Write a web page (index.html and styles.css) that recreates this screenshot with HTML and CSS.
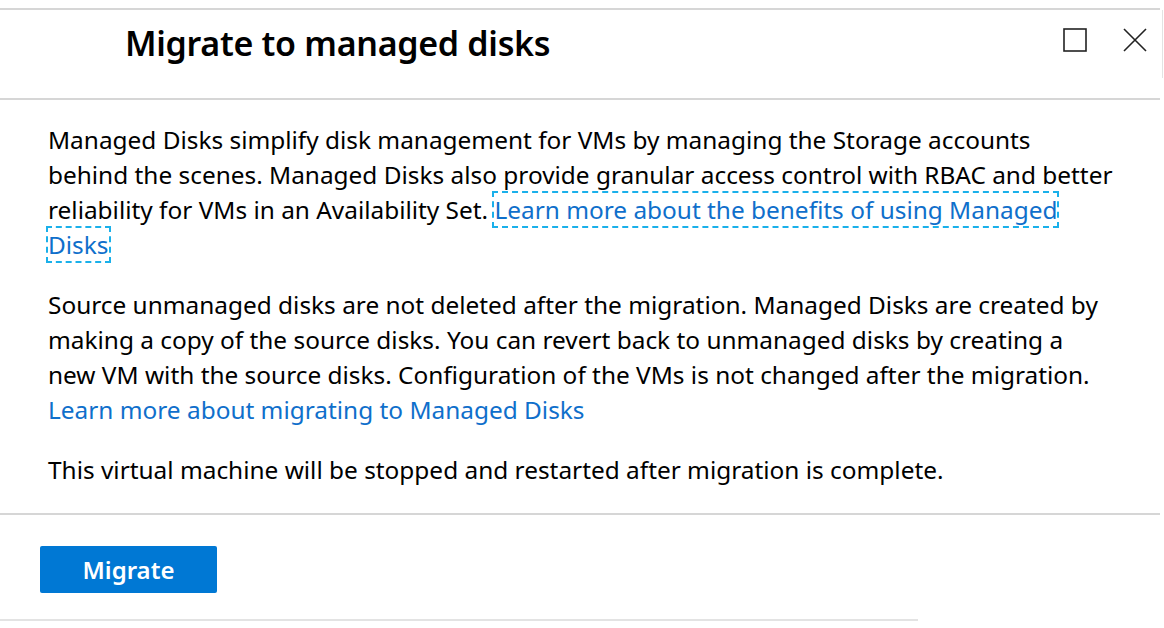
FILE: index.html
```html
<!DOCTYPE html>
<html>
<head lang="en">
    <meta charset="UTF-8">
    <title>Migrate to managed disks</title>
    <link rel="stylesheet" href="styles.css">
</head>
<body>
 <div id="blade">
     <div id="header">
         <h2 id="title">Migrate to managed disks</h2>
         <div id="controls">
             <span class="ctrl" title="Maximize">
                 <svg width="24" height="24" viewBox="0 0 24 24"><rect x="1" y="1" width="22" height="22" fill="none" stroke="#222" stroke-width="1.6"/></svg>
             </span>
             <span class="ctrl" title="Close">
                 <svg width="24" height="24" viewBox="0 0 24 24"><path d="M1 1L23 23M23 1L1 23" fill="none" stroke="#222" stroke-width="1.6"/></svg>
             </span>
         </div>
     </div>
     <div id="content">
         <p>Managed Disks simplify disk management for VMs by managing the Storage accounts behind the scenes. Managed Disks also provide granular access control with RBAC and better reliability for VMs in an Availability Set. <a href="#" class="link focus">Learn more about the benefits of using Managed Disks</a></p>
         <p>Source unmanaged disks are not deleted after the migration. Managed Disks are created by making a copy of the source disks. You can revert back to unmanaged disks by creating a new VM with the source disks. Configuration of the VMs is not changed after the migration. <a href="#" class="link">Learn more about migrating to Managed Disks</a></p>
         <p>This virtual machine will be stopped and restarted after migration is complete.</p>
     </div>
     <div id="footer">
         <button id="migrate-btn">Migrate</button>
     </div>
     <div id="bottom-line"></div>
 </div>
</body>
</html>
```

FILE: styles.css
```css
 *{
     margin: 0;
     padding: 0;
 }
 body{
     background-color: #fff;
     font-family: "Noto Sans", "Open Sans", sans-serif;
     color: #000;
 }
 #blade{
     width: 1160px;
     margin-top: 8px;
     border-top: 2px solid #d6d6d6;
 }
 #header{
     height: 88px;
     border-bottom: 2px solid #d6d6d6;
     display: flex;
     align-items: flex-start;
     justify-content: space-between;
     position: relative;
 }
 #header:after{
     content: "";
     position: absolute;
     right: -3px;
     top: 0;
     width: 1px;
     height: 68px;
     background-color: #e3e3e3;
 }
 #title{
     font-size: 34px;
     font-weight: 600;
     margin: 11px 0 0 125px;
     line-height: 44px;
     letter-spacing: -0.3px;
 }
 #controls{
     display: flex;
     gap: 36px;
     margin: 18px 13px 0 0;
 }
 .ctrl{
     width: 24px;
     height: 24px;
     display: block;
 }
 .ctrl svg{
     display: block;
 }
 #content{
     padding: 22px 47px 26px 48px;
     border-bottom: 2px solid #d6d6d6;
     font-size: 24.4px;
     line-height: 35px;
 }
 #content p{
     margin-bottom: 25px;
 }
 #content p:last-child{
     margin-bottom: 0;
 }
 .link{
     color: #0f6fcb;
     text-decoration: none;
 }
 .focus{
     outline: 2px dashed #1ab0ea;
     outline-offset: 0;
 }
 #footer{
     padding: 31px 0 26px 40px;
 }
 #migrate-btn{
     display: block;
     width: 177px;
     height: 47px;
     border: none;
     border-radius: 2px;
     background-color: #0078d4;
     color: #fff;
     font-family: "Noto Sans", "Open Sans", sans-serif;
     font-size: 24px;
     font-weight: 600;
 }
 #bottom-line{
     width: 918px;
     height: 2px;
     background-color: #e3e3e3;
 }
```
